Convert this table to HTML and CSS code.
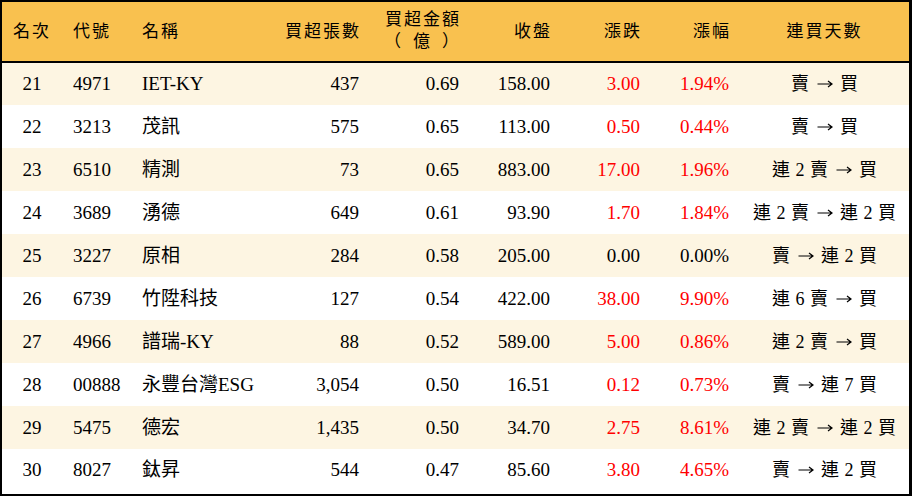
FILE: index.html
```html
<!DOCTYPE html>
<html lang="zh-Hant">
<head>
<meta charset="utf-8">
<link rel="stylesheet" href="styles.css">
</head>
<body>
<div class="frame">
<table class="rank-table">
<colgroup>
<col class="c-rank"><col class="c-code"><col class="c-name"><col class="c-vol"><col class="c-amt"><col class="c-close"><col class="c-chg"><col class="c-pct"><col class="c-days">
</colgroup>
<thead>
<tr>
<th class="ctr">名次</th>
<th class="lft">代號</th>
<th class="lft">名稱</th>
<th class="rgt">買超張數</th>
<th class="rgt two">買超金額<br><span class="unit">（億）</span></th>
<th class="rgt">收盤</th>
<th class="rgt">漲跌</th>
<th class="rgt">漲幅</th>
<th class="ctr">連買天數</th>
</tr>
</thead>
<tbody>
<tr><td class="ctr">21</td><td class="lft">4971</td><td class="lft">IET-KY</td><td class="rgt">437</td><td class="rgt">0.69</td><td class="rgt">158.00</td><td class="rgt up">3.00</td><td class="rgt up">1.94%</td><td class="ctr days">賣 <svg class="arrow" viewBox="0 0 16 10"><path d="M0.5 5H15M11 2L15 5L11 8"/></svg> 買</td></tr>
<tr><td class="ctr">22</td><td class="lft">3213</td><td class="lft">茂訊</td><td class="rgt">575</td><td class="rgt">0.65</td><td class="rgt">113.00</td><td class="rgt up">0.50</td><td class="rgt up">0.44%</td><td class="ctr days">賣 <svg class="arrow" viewBox="0 0 16 10"><path d="M0.5 5H15M11 2L15 5L11 8"/></svg> 買</td></tr>
<tr><td class="ctr">23</td><td class="lft">6510</td><td class="lft">精測</td><td class="rgt">73</td><td class="rgt">0.65</td><td class="rgt">883.00</td><td class="rgt up">17.00</td><td class="rgt up">1.96%</td><td class="ctr days">連 2 賣 <svg class="arrow" viewBox="0 0 16 10"><path d="M0.5 5H15M11 2L15 5L11 8"/></svg> 買</td></tr>
<tr><td class="ctr">24</td><td class="lft">3689</td><td class="lft">湧德</td><td class="rgt">649</td><td class="rgt">0.61</td><td class="rgt">93.90</td><td class="rgt up">1.70</td><td class="rgt up">1.84%</td><td class="ctr days">連 2 賣 <svg class="arrow" viewBox="0 0 16 10"><path d="M0.5 5H15M11 2L15 5L11 8"/></svg> 連 2 買</td></tr>
<tr><td class="ctr">25</td><td class="lft">3227</td><td class="lft">原相</td><td class="rgt">284</td><td class="rgt">0.58</td><td class="rgt">205.00</td><td class="rgt">0.00</td><td class="rgt">0.00%</td><td class="ctr days">賣 <svg class="arrow" viewBox="0 0 16 10"><path d="M0.5 5H15M11 2L15 5L11 8"/></svg> 連 2 買</td></tr>
<tr><td class="ctr">26</td><td class="lft">6739</td><td class="lft">竹陞科技</td><td class="rgt">127</td><td class="rgt">0.54</td><td class="rgt">422.00</td><td class="rgt up">38.00</td><td class="rgt up">9.90%</td><td class="ctr days">連 6 賣 <svg class="arrow" viewBox="0 0 16 10"><path d="M0.5 5H15M11 2L15 5L11 8"/></svg> 買</td></tr>
<tr><td class="ctr">27</td><td class="lft">4966</td><td class="lft">譜瑞-KY</td><td class="rgt">88</td><td class="rgt">0.52</td><td class="rgt">589.00</td><td class="rgt up">5.00</td><td class="rgt up">0.86%</td><td class="ctr days">連 2 賣 <svg class="arrow" viewBox="0 0 16 10"><path d="M0.5 5H15M11 2L15 5L11 8"/></svg> 買</td></tr>
<tr><td class="ctr">28</td><td class="lft">00888</td><td class="lft">永豐台灣ESG</td><td class="rgt">3,054</td><td class="rgt">0.50</td><td class="rgt">16.51</td><td class="rgt up">0.12</td><td class="rgt up">0.73%</td><td class="ctr days">賣 <svg class="arrow" viewBox="0 0 16 10"><path d="M0.5 5H15M11 2L15 5L11 8"/></svg> 連 7 買</td></tr>
<tr><td class="ctr">29</td><td class="lft">5475</td><td class="lft">德宏</td><td class="rgt">1,435</td><td class="rgt">0.50</td><td class="rgt">34.70</td><td class="rgt up">2.75</td><td class="rgt up">8.61%</td><td class="ctr days">連 2 賣 <svg class="arrow" viewBox="0 0 16 10"><path d="M0.5 5H15M11 2L15 5L11 8"/></svg> 連 2 買</td></tr>
<tr><td class="ctr">30</td><td class="lft">8027</td><td class="lft">鈦昇</td><td class="rgt">544</td><td class="rgt">0.47</td><td class="rgt">85.60</td><td class="rgt up">3.80</td><td class="rgt up">4.65%</td><td class="ctr days">賣 <svg class="arrow" viewBox="0 0 16 10"><path d="M0.5 5H15M11 2L15 5L11 8"/></svg> 連 2 買</td></tr>
</tbody>
</table>
</div>
</body>
</html>
```
FILE: styles.css
```css
html, body {
  margin: 0;
  padding: 0;
  background: #ffffff;
}
.frame {
  width: 912px;
  height: 496px;
  box-sizing: border-box;
  border-style: solid;
  border-color: #000000;
  border-width: 2px 3px 2px 2px;
  overflow: hidden;
}
.rank-table {
  width: 907px;
  border-collapse: collapse;
  table-layout: fixed;
  font-family: "Liberation Serif", "Noto Sans CJK TC", serif;
  font-size: 19px;
  color: #000000;
}
.c-rank { width: 60px; }
.c-code { width: 70px; }
.c-name { width: 128px; }
.c-vol { width: 110px; }
.c-amt { width: 100px; }
.c-close { width: 91px; }
.c-chg { width: 90px; }
.c-pct { width: 89px; }
.c-days { width: 169px; }

thead tr {
  background: #f9c14f;
  height: 60px;
  border-bottom: 2px solid #000000;
}
th {
  font-weight: normal;
  font-size: 17px;
  letter-spacing: 2px;
  padding: 0;
  white-space: nowrap;
  line-height: 18px;
}
th.two {
  line-height: 20px;
  padding-bottom: 1px;
}
.unit {
  font-family: "Noto Sans CJK TC", sans-serif;
  letter-spacing: 12px;
  margin-right: -10px;
}
tbody tr {
  height: 43px;
}
tbody tr:nth-child(odd) {
  background: #fdf5e2;
}
tbody tr:last-child {
  height: 42px;
}
td {
  padding: 0;
  white-space: nowrap;
  line-height: 20px;
}
.ctr { text-align: center; }
.lft { text-align: left; padding-left: 11px; }
td.lft + td.lft, th.lft + th.lft { padding-left: 10px; }
.rgt { text-align: right; padding-right: 11px; }
th.rgt { padding-right: 9px; }
.up { color: #ff0000; }
.days {
  font-size: 18px;
  word-spacing: 1px;
}
.arrow {
  width: 16px;
  height: 10px;
  margin: 0 2px;
  vertical-align: 1px;
  fill: none;
  stroke: #000000;
  stroke-width: 1.2;
}
```
